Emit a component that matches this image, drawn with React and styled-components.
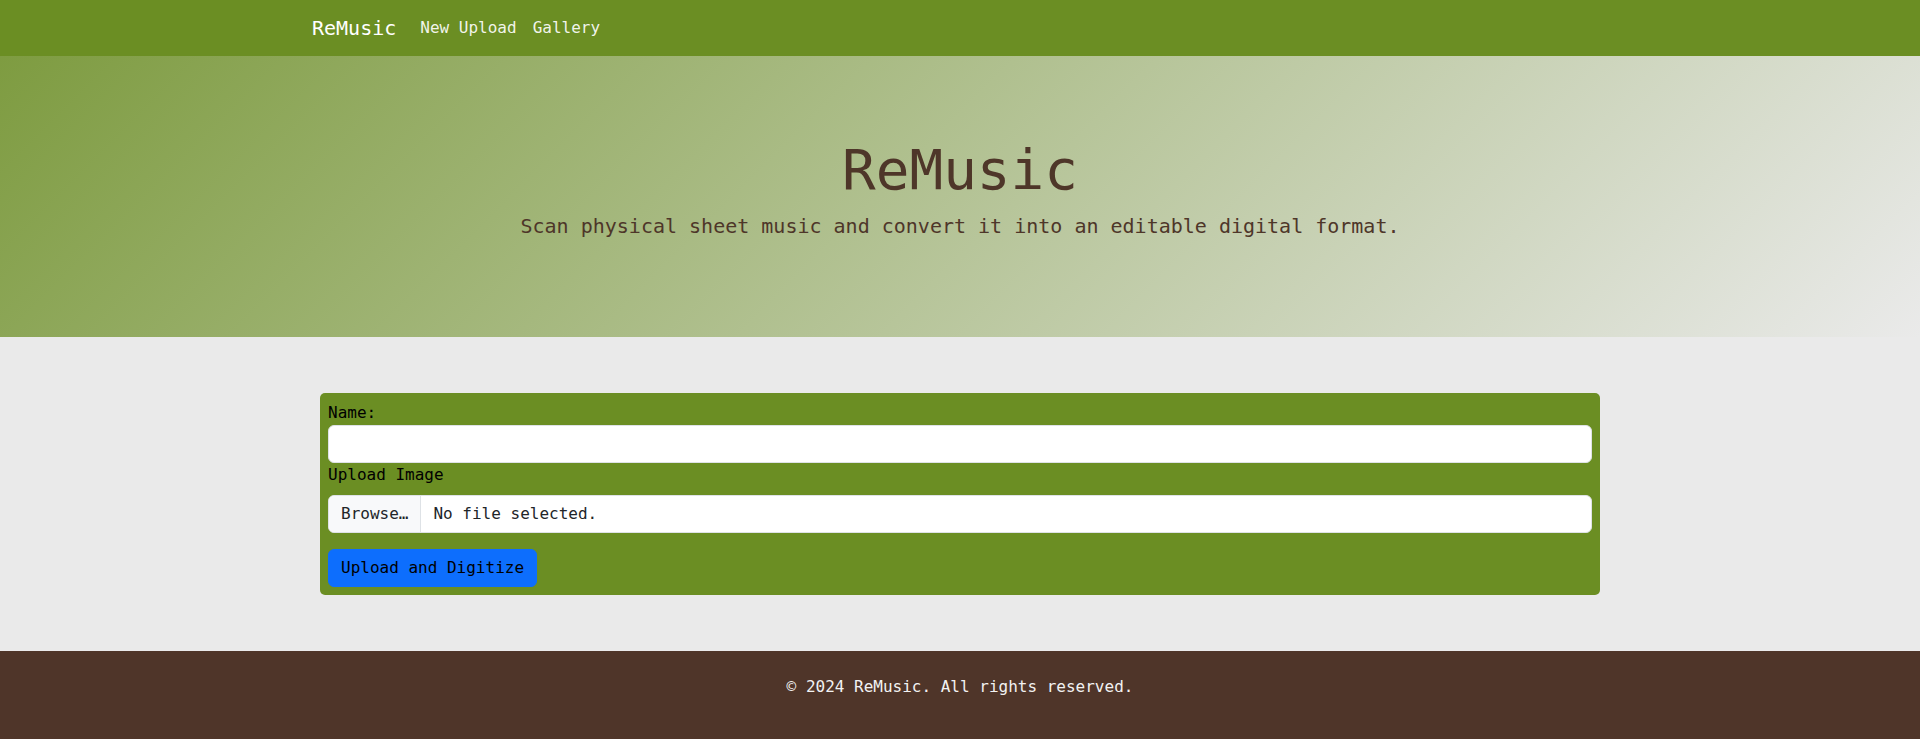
import React, { useState } from "react";
import styled, { createGlobalStyle } from "styled-components";

const GlobalStyle = createGlobalStyle`
  *, *::before, *::after { box-sizing: border-box; }
  body {
    margin: 0;
    background: #eaeaea;
    color: #000;
    font-family: "DejaVu Sans Mono", "Liberation Mono", monospace;
    font-size: 16px;
    line-height: 1.5;
  }
`;

const NavBar = styled.nav`
  height: 56px;
  background: #6b8e23;
  display: flex;
  align-items: center;
`;
const NavInner = styled.div`
  width: 1320px;
  margin: 0 auto;
  padding: 0 12px;
  display: flex;
  align-items: center;
`;
const Brand = styled.a`
  color: #fff;
  font-size: 20px;
  margin-right: 16px;
  text-decoration: none;
`;
const NavLink = styled.a`
  color: rgba(255, 255, 255, 0.92);
  padding: 8px;
  text-decoration: none;
`;

const Hero = styled.header`
  padding: 80px 0;
  text-align: center;
  color: #4e3629;
  background: linear-gradient(
    135deg,
    rgba(107, 142, 35, 0.85),
    rgba(234, 234, 234, 0.9)
  );
`;
const Title = styled.h1`
  margin: 0 0 8px;
  font-size: 56px;
  font-weight: 400;
  line-height: 1.2;
`;
const Lead = styled.p`
  margin: 0 0 16px;
  font-size: 20px;
`;

const Main = styled.main`
  padding: 56px 0;
`;
const FormCard = styled.form`
  width: 1280px;
  margin: 0 auto;
  padding: 8px;
  background: #6b8e23;
  border-radius: 5px;
`;
const Label = styled.label`
  display: block;
  margin-bottom: ${(props) => (props.spaced ? "8px" : "0")};
`;
const TextInput = styled.input`
  display: block;
  width: 100%;
  height: 38px;
  padding: 6px 12px;
  font: inherit;
  border: 1px solid #dee2e6;
  border-radius: 6px;
  background: #fff;
`;
const FileBox = styled.label`
  display: flex;
  height: 38px;
  background: #fff;
  border: 1px solid #dee2e6;
  border-radius: 6px;
  overflow: hidden;
  color: #212529;
  cursor: pointer;
`;
const FileButton = styled.span`
  display: flex;
  align-items: center;
  padding: 0 12px;
  background: #f8f9fa;
  border-right: 1px solid #dee2e6;
`;
const FileName = styled.span`
  display: flex;
  align-items: center;
  padding: 0 12px;
`;
const HiddenFile = styled.input`
  display: none;
`;
const SubmitButton = styled.button`
  margin-top: 16px;
  height: 38px;
  padding: 0 12px;
  font: inherit;
  color: #000;
  background: #0d6efd;
  border: 1px solid #0d6efd;
  border-radius: 6px;
  cursor: pointer;
`;

const Footer = styled.footer`
  background: #4f3529;
  color: #f2f2f2;
  text-align: center;
  padding-top: 24px;
  padding-bottom: 24px;
`;
const FooterText = styled.p`
  margin: 0 0 16px;
`;

export default function App() {
  const [name, setName] = useState("");
  const [file, setFile] = useState(null);

  return (
    <>
      <GlobalStyle />
      <NavBar>
        <NavInner>
          <Brand href="#">ReMusic</Brand>
          <NavLink href="#">New Upload</NavLink>
          <NavLink href="#">Gallery</NavLink>
        </NavInner>
      </NavBar>
      <Hero>
        <Title>ReMusic</Title>
        <Lead>
          Scan physical sheet music and convert it into an editable digital
          format.
        </Lead>
      </Hero>
      <Main>
        <FormCard onSubmit={(e) => e.preventDefault()}>
          <Label htmlFor="name">Name:</Label>
          <TextInput
            id="name"
            value={name}
            onChange={(e) => setName(e.target.value)}
          />
          <Label spaced>Upload Image</Label>
          <FileBox>
            <FileButton>Browse…</FileButton>
            <FileName>{file ? file.name : "No file selected."}</FileName>
            <HiddenFile
              type="file"
              onChange={(e) => setFile(e.target.files[0] || null)}
            />
          </FileBox>
          <SubmitButton type="submit">Upload and Digitize</SubmitButton>
        </FormCard>
      </Main>
      <Footer>
        <FooterText>© 2024 ReMusic. All rights reserved.</FooterText>
      </Footer>
    </>
  );
}
